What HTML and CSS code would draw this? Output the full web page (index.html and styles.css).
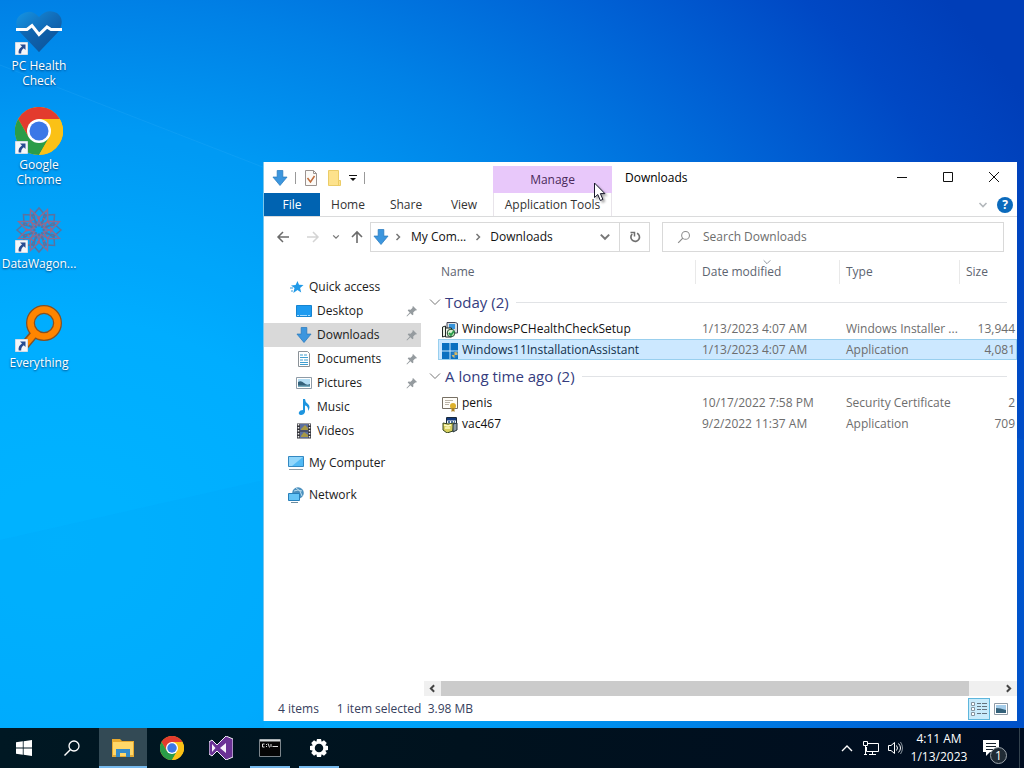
FILE: index.html
```html
<!DOCTYPE html>
<html lang="en">
<head>
<meta charset="utf-8">
<title>Downloads</title>
<link rel="stylesheet" href="styles.css">
</head>
<body>
<svg class="defs" aria-hidden="true">
  <symbol id="download" viewBox="0 0 16 17"><path d="M5 .5h6v7h4.500L8 16.500.5 7.500H5z" fill="#3c96de" stroke="#2879bd" stroke-width=".8"/></symbol>
  <symbol id="chrome" viewBox="0 0 48 48">
    <circle cx="24" cy="24" r="24" fill="#fbc116"/>
    <path d="M3.200 12A24 24 0 0 1 44.800 12H24L13.600 30z" fill="#e33b2e"/>
    <path d="M3.200 12A24 24 0 0 0 24 48L34.400 30 24 35 13.600 30z" fill="#2a9c48"/>
    <path d="M24 48A24 24 0 0 0 44.800 12H24L34.400 30z" fill="#fbc116"/>
    <circle cx="24" cy="24" r="12" fill="#fff"/><circle cx="24" cy="24" r="9.500" fill="#3b78e7"/>
  </symbol>
  <symbol id="shortcut" viewBox="0 0 13 13"><path d="M.5.5h12v12H.5z" fill="#f5f7fa" stroke="#d4dce5"/><path d="M5 2.500h5.500V8L8.800 6.300Q6 8 6.200 11.500H3.700Q2.800 7 7 4.500z" fill="#284c91"/></symbol>
  <symbol id="chevron" viewBox="0 0 10 10"><path d="M1.500 3l3.500 3.500L8.500 3" fill="none" stroke="currentColor" stroke-width="1.600"/></symbol>
  <symbol id="chevron-thin" viewBox="0 0 12 12"><path d="M1 3.500l5 5 5-5" fill="none" stroke="currentColor"/></symbol>
  <symbol id="chevron-right" viewBox="0 0 10 10"><path d="M3.500 2l3 3-3 3" fill="none" stroke="currentColor" stroke-width="1.500"/></symbol>
  <symbol id="pin" viewBox="0 0 12 12"><path d="M7 1l4 4-1 .6-.8-.2-2 2 .2 2.100-1 .8-2-2L1 11.500.5 11l3.200-3.400-2-2 .8-1 2.100.2 2-2-.2-.8z" fill="#959b9f"/></symbol>
  <symbol id="search" viewBox="0 0 18 18"><circle cx="11" cy="7" r="5" fill="none" stroke="currentColor" stroke-width="1.300"/><path d="M7.500 10.500L1.500 16.500" stroke="currentColor" stroke-width="1.500"/></symbol>
  <symbol id="photo" viewBox="0 0 16 12"><path d="M.5.5h15v11H.5z" fill="#fff" stroke="#8f9ba6"/><path d="M2 2h12v8H2z" fill="#b4def5"/><path d="M2 5q3-2 6 1t6 1v3H2z" fill="#34617a"/><path d="M2 8.500h12V10H2z" fill="#77adc0"/></symbol>
</svg>

<div class="screen">
<main class="desktop">
  <svg class="rays" viewBox="0 0 1024 728" preserveAspectRatio="none" aria-hidden="true">
    <path d="M0 65L430 232 1024 440V728H0z" fill="#00a5ff" opacity=".08"/>
    <path d="M0 65L430 232" stroke="#5dc7ff" opacity=".12"/>
    <path d="M0 540L264 480V728H0z" fill="#0090e6" opacity=".08"/>
  </svg>
  <ul class="shortcuts">
    <li><a href="#health">
      <span class="shortcut-art">
        <svg viewBox="0 0 48 48"><defs><linearGradient id="heart" x1="0" y1="0" x2="1" y2="1"><stop offset="0" stop-color="#1595e4"/><stop offset=".5" stop-color="#126cb8"/><stop offset="1" stop-color="#0b4c93"/></linearGradient></defs>
          <path d="M24 44L5 24Q-3 13 6 6.500 16 0 24 9 32 0 42 5 51 12 43 24z" fill="url(#heart)"/>
          <path d="M2 22h11l5-5 8 9 9-8 5 4h7L43 24 24 44 5 24z" fill="#0b559e" opacity=".5"/>
          <path d="M1 21.500h11l5-4 7 9 8-7.500 4 2.500h11" fill="none" stroke="#fff" stroke-width="3"/></svg>
        <svg class="badge"><use href="#shortcut"/></svg>
      </span>PC Health<br>Check</a></li>
    <li><a href="#chrome-app">
      <span class="shortcut-art"><svg><use href="#chrome"/></svg><svg class="badge"><use href="#shortcut"/></svg></span>Google<br>Chrome</a></li>
    <li><a href="#datawagon">
      <span class="shortcut-art">
        <svg viewBox="-24 -24 48 48" fill="none" stroke-width="1.500">
          <g stroke="#5a729f"><path id="petal" d="M0-4L7-14 0-22-7-14z"/><use href="#petal" transform="rotate(45)"/><use href="#petal" transform="rotate(90)"/><use href="#petal" transform="rotate(135)"/><use href="#petal" transform="rotate(180)"/><use href="#petal" transform="rotate(225)"/><use href="#petal" transform="rotate(270)"/><use href="#petal" transform="rotate(315)"/></g>
          <g stroke="#8e6b91" transform="rotate(22.500)"><path id="spike" d="M0-5L5-11 0-22-5-11z"/><use href="#spike" transform="rotate(45)"/><use href="#spike" transform="rotate(90)"/><use href="#spike" transform="rotate(135)"/><use href="#spike" transform="rotate(180)"/><use href="#spike" transform="rotate(225)"/><use href="#spike" transform="rotate(270)"/><use href="#spike" transform="rotate(315)"/></g>
          <circle r="12" stroke="#a9627f" stroke-dasharray="3 3"/>
        </svg>
        <svg class="badge"><use href="#shortcut"/></svg>
      </span>DataWagon...</a></li>
    <li><a href="#everything">
      <span class="shortcut-art">
        <svg viewBox="0 0 48 48" fill="none"><circle cx="29" cy="18" r="13.500" stroke="#865022" stroke-width="9"/><path d="M20 28L9 41" stroke="#865022" stroke-width="9"/><path d="M21 27L10 40" stroke="#ff8500" stroke-width="6"/><circle cx="29" cy="18" r="13.500" stroke="#ff8500" stroke-width="6.500"/></svg>
        <svg class="badge"><use href="#shortcut"/></svg>
      </span>Everything</a></li>
  </ul>

  <section class="window" aria-label="Downloads">
    <header class="ribbon">
      <div class="ribbon-start">
        <div class="quick-bar">
          <svg class="i16"><use href="#download"/></svg>
          <span class="rule"></span>
          <button aria-label="Properties"><svg class="i16" viewBox="0 0 16 16"><path d="M2.500.5h8l3 3v12h-11z" fill="#fcfaf7" stroke="#9a9390"/><path d="M10.500.5v3h3" fill="none" stroke="#9a9390"/><path d="M4.500 8l3 4 4-6" fill="none" stroke="#c06c3c" stroke-width="1.500"/></svg></button>
          <button aria-label="New folder"><svg class="i16" viewBox="0 0 16 16"><path d="M2.500.5h10v10h2v5h-12z" fill="#fde28c" stroke="#ebcc67"/><path d="M12.500 10.500v5" stroke="#edcb62"/></svg></button>
          <button class="customize" aria-label="Customize toolbar"><svg viewBox="0 0 8 8"><path d="M0 1.500h8" stroke="#111"/><path d="M1 4h6L4 7z" fill="#111"/></svg></button>
          <span class="rule"></span>
        </div>
        <nav class="tabs"><button class="file">File</button><button>Home</button><button>Share</button><button>View</button></nav>
      </div>
      <div class="context-tab"><span>Manage</span><button>Application Tools</button></div>
      <div class="ribbon-end">
        <div class="title-row"><h1>Downloads</h1>
          <button aria-label="Minimize"><svg viewBox="0 0 10 10"><path d="M0 5.500h10" stroke="#111"/></svg></button>
          <button aria-label="Maximize"><svg viewBox="0 0 10 10"><path d="M.5.5h9v9h-9z" stroke="#111" fill="none"/></svg></button>
          <button aria-label="Close"><svg viewBox="0 0 10 10"><path d="M0 0l10 10M10 0L0 10" stroke="#111"/></svg></button>
        </div>
        <div class="help-row"><button aria-label="Expand ribbon"><svg class="i10"><use href="#chevron"/></svg></button><button class="help" aria-label="Help">?</button></div>
      </div>
    </header>

    <div class="nav-row">
      <div class="history">
        <button aria-label="Back"><svg viewBox="0 0 14 14"><path d="M13 7H2M7 2L2 7l5 5" fill="none" stroke="#6b6b6b" stroke-width="1.500"/></svg></button>
        <button aria-label="Forward"><svg viewBox="0 0 14 14"><path d="M1 7h11M7 2l5 5-5 5" fill="none" stroke="#d4d4d4" stroke-width="1.500"/></svg></button>
        <button class="recent" aria-label="Recent locations"><svg><use href="#chevron"/></svg></button>
        <button class="up" aria-label="Up"><svg viewBox="0 0 14 14"><path d="M7 13V2M2 7l5-5 5 5" fill="none" stroke="#6b6b6b" stroke-width="1.600"/></svg></button>
      </div>
      <div class="address">
        <svg class="i16"><use href="#download"/></svg>
        <svg class="crumb-arrow"><use href="#chevron-right"/></svg>
        <button>My Com...</button>
        <svg class="crumb-arrow"><use href="#chevron-right"/></svg>
        <button class="current">Downloads</button>
        <button class="drop" aria-label="Previous locations"><svg class="i12"><use href="#chevron"/></svg></button>
        <button class="refresh" aria-label="Refresh"><svg viewBox="0 0 12 12"><path d="M3.200 3A4.300 4.300 0 1 0 8 2.200" fill="none" stroke="#6f6f6f" stroke-width="1.700"/><path d="M1.500 1.500h4v4" fill="none" stroke="#6f6f6f" stroke-width="1.500"/></svg></button>
      </div>
      <label class="search-box"><svg class="i14"><use href="#search"/></svg><input type="search" placeholder="Search Downloads" aria-label="Search Downloads"></label>
    </div>

    <div class="body">
      <nav class="sidebar" aria-label="Folders">
        <a class="root" href="#quick"><svg class="i16" viewBox="0 0 16 16"><path d="M9.500 2l1.500 3.800 4.500.3-3.400 2.800 1.100 4.600-3.700-2.600-4.200 3 1.200-5L3 6.500l4.600-.5z" fill="#219ae8"/><path d="M2 9h3M3 12h2" stroke="#3a9bd9"/></svg>Quick access</a>
        <a href="#desktop"><svg class="i16" viewBox="0 0 16 16"><path d="M.5 2.500h15v11H.5z" fill="#1e9bf0" stroke="#1684d0"/><path d="M1 12.500h14" stroke="#a8dcff" stroke-dasharray="2 1 7 1"/></svg><span>Desktop</span><svg class="pin"><use href="#pin"/></svg></a>
        <a class="active" href="#downloads"><svg class="i16"><use href="#download"/></svg><span>Downloads</span><svg class="pin"><use href="#pin"/></svg></a>
        <a href="#documents"><svg class="i16" viewBox="0 0 16 16"><path d="M2.500.5h9l2 2v13h-11z" fill="#fff" stroke="#8b9298"/><path d="M4 4h3M8 4h3M4 6.500h8M4 9h3M8 9h4M4 11.500h8M4 13.500h8" stroke="#3e9ed0"/></svg><span>Documents</span><svg class="pin"><use href="#pin"/></svg></a>
        <a href="#pictures"><svg class="i16"><use href="#photo"/></svg><span>Pictures</span><svg class="pin"><use href="#pin"/></svg></a>
        <a href="#music"><svg class="i16" viewBox="0 0 16 16"><path d="M7 0h2q0 3 3 5 3 3 0 7 .5-5-3-5.500V13q-1 3-4 3-3-.5-2-3 1-2 4-2z" fill="#1e95df"/></svg><span>Music</span></a>
        <a href="#videos"><svg class="i16" viewBox="0 0 16 16"><path d="M1 .5h14v15H1z" fill="#34353b"/><path d="M4 1h8v6.500H4zM4 8.500h8V15H4z" fill="#5c6f9e"/><path d="M5 6l4-4 3 3v2H5zM5 13l3-4 4 3v2H5z" fill="#a89945"/><path d="M2.500 1v14M13.500 1v14" stroke="#eee" stroke-width="1.500" stroke-dasharray="1.500 1.500"/></svg><span>Videos</span></a>
        <a class="root spaced" href="#computer"><svg class="i16" viewBox="0 0 16 16"><path d="M.5 1.500h15v10H.5z" fill="#51b9f4" stroke="#3488c1"/><path d="M1 2h14L4 11H1z" fill="#91d6fb"/><path d="M1 14.500h14" stroke="#8d9da8"/></svg>My Computer</a>
        <a class="root spaced" href="#network"><svg class="i16" viewBox="0 0 16 16"><circle cx="10" cy="6" r="5.800" fill="#4c90be"/><path d="M8 1q5 2 6 8M6 4q4-2 8 0" stroke="#b9ddef" fill="none"/><path d="M.5 6.500h11v7H.5z" fill="#65c4f6" stroke="#287fb9"/><path d="M3 15.500h7" stroke="#6b8ca0"/></svg>Network</a>
      </nav>

      <div class="listing">
        <div class="list-scroll">
        <table class="files">
          <colgroup><col class="col-name"><col class="col-date"><col class="col-type"><col class="col-size"></colgroup>
          <thead><tr><th scope="col">Name</th><th scope="col">Date modified<svg class="sort"><use href="#chevron-thin"/></svg></th><th scope="col">Type</th><th scope="col">Size</th></tr></thead>
          <tbody>
            <tr class="group"><th colspan="4" scope="rowgroup"><button><svg class="i12"><use href="#chevron-thin"/></svg>Today (2)</button></th></tr>
            <tr><td><svg class="i16" viewBox="0 0 16 16"><path d="M5 .5h8.500l2 1V11H5z" fill="#d8dfe3" stroke="#445"/><path d="M7 2h6v5H7z" fill="#3593db"/><path d="M.5 5l3-1v10l-3 1zM3.500 6h6v9h-6z" fill="#edf3e9" stroke="#202824"/><circle cx="9" cy="11" r="3.800" fill="#d9f4cf" stroke="#244a30"/><path d="M7 11l2 2 3-4" stroke="#2a9c4b" stroke-width="2" fill="none"/></svg>WindowsPCHealthCheckSetup</td><td>1/13/2023 4:07 AM</td><td>Windows Installer ...</td><td>13,944</td></tr>
            <tr class="selected"><td><svg class="i16" viewBox="0 0 16 16"><path d="M0 0h7.500v7.500H0zM8.500 0H16v7.500H8.500zM0 8.500h7.500V16H0zM8.500 8.500H16V16H8.500z" fill="#0b70c0"/><path d="M12.500 8.500q2 1 3.500 1v3q-1 2-3.500 3-2.500-1-3-3v-3q2 0 3-1z" fill="#247dc5"/><path d="M12.500 9v3H9.700q.5 2 2.800 3v-3H15.500v-2.500z" fill="#d9b963"/></svg>Windows11InstallationAssistant</td><td>1/13/2023 4:07 AM</td><td>Application</td><td>4,081</td></tr>
            <tr class="group"><th colspan="4" scope="rowgroup"><button><svg class="i12"><use href="#chevron-thin"/></svg>A long time ago (2)</button></th></tr>
            <tr><td><svg class="i16" viewBox="0 0 16 16"><path d="M.5 1.500h15v11H.5z" fill="#fffdf8" stroke="#777064"/><path d="M3 4.500h8M3 6.500h5M3 8.500h4" stroke="#bcb5a8"/><circle cx="11" cy="10" r="3" fill="#ddb12c"/><path d="M9.500 12v4l1.500-1 1.500 1v-4" fill="#aa8124"/></svg>penis</td><td>10/17/2022 7:58 PM</td><td>Security Certificate</td><td>2</td></tr>
            <tr><td><svg class="i16" viewBox="0 0 16 16"><path d="M4.500.5h10v8h-10z" fill="#f4f7f4" stroke="#17283a"/><path d="M5 1h9v2.500H5z" fill="#12397d"/><path d="M6 5h2M9 5h2M12 5h1" stroke="#1d4d8a" stroke-width="1.500"/><path d="M1 6l5 1 6-1-1 8-6 2-4-3z" fill="#d6cf5e" stroke="#36461f"/><path d="M2 8l4 1 3-1M3 11h5" stroke="#fffbc0" stroke-width="1.500" fill="none"/><path d="M11 7l4-1v7l-4 2z" fill="#8c9ca5" stroke="#253238"/></svg>vac467</td><td>9/2/2022 11:37 AM</td><td>Application</td><td>709</td></tr>
          </tbody>
        </table>
        </div>
        <div class="scrollbar"><button aria-label="Scroll left"><svg viewBox="0 0 10 10"><path d="M6.500 2l-3 3 3 3" stroke="#444" stroke-width="1.800" fill="none"/></svg></button><div class="track"><div class="thumb"></div></div><button aria-label="Scroll right"><svg viewBox="0 0 10 10"><path d="M3.500 2l3 3-3 3" stroke="#444" stroke-width="1.800" fill="none"/></svg></button></div>
      </div>
    </div>

    <footer class="status"><span>4 items</span><span class="picked">1 item selected&nbsp; 3.98 MB</span>
      <div class="views"><button class="on" aria-label="Details view"><svg viewBox="0 0 16 14"><path d="M.5.5h3v3h-3zM.5 5.500h3v3h-3zM.5 10.500h3v3h-3z" fill="#fff" stroke="#8595a0"/><path d="M6 1.500h4M11 1.500h5M6 4.500h4M11 4.500h5M6 7.500h4M11 7.500h5M6 11.500h4M11 11.500h5" stroke="#64727e"/></svg></button><button aria-label="Thumbnail view"><svg class="thumbs" viewBox="0 0 14 12"><path d="M.5.5h13v11H.5z" fill="#fff" stroke="#8f9ba6"/><path d="M2 2h10v8H2z" fill="#a5cdea"/><path d="M2 5q4 0 10 2v3H2z" fill="#34617a"/></svg></button></div>
    </footer>
  </section>
  <svg class="cursor" viewBox="0 0 14 20" aria-hidden="true"><path d="M1.500 1v14.500l3.300-3 2.500 6 2.600-1.100-2.500-5.800h4.500z" fill="#fff" stroke="#17172a"/></svg>
</main>

<footer class="taskbar">
  <div class="launch">
    <button aria-label="Start"><svg class="i16" viewBox="0 0 16 16"><path d="M0 2.200l6.800-.9v6.200H0zM7.600 1.200L16 0v7.500H7.600zM0 8.400h6.800v6.300L0 13.800zM7.600 8.400H16V16l-8.400-1.200z" fill="#fff"/></svg></button>
    <button aria-label="Search"><svg class="i18"><use href="#search"/></svg></button>
  </div>
  <div class="apps">
    <button class="current" aria-label="File Explorer"><svg class="i24" viewBox="0 0 24 24"><path d="M1 3h8l2 2h12v16H1z" fill="#e8a92e"/><path d="M2 6h20v14H2z" fill="#ffd769"/><path d="M5 13h14v8h-4v-4H9v4H5z" fill="#348bca"/><path d="M1 20h4M19 20h4" stroke="#e2aa38" stroke-width="2"/></svg></button>
    <button aria-label="Google Chrome"><svg class="i24"><use href="#chrome"/></svg></button>
    <button aria-label="Visual Studio"><svg class="i24" viewBox="0 0 24 24"><path d="M0 6l3-2 5 5 9-9 7 3v18l-7 3-9-9-5 5-3-2z" fill="#6b3295" stroke="#f3eef8"/><path d="M3 8v8l3.500-4zM11 12l6 5V7z" fill="#f7f2fb"/></svg></button>
    <button class="running" aria-label="Command Prompt"><svg class="i22" viewBox="0 0 22 20"><path d="M.5 1.500h21v17H.5z" fill="#050505" stroke="#7d868c"/><path d="M1 2.500h20" stroke="#d8dcdd" stroke-width="2"/><path d="M5.500 6h-2v3h2M7.500 6v1M7.500 8v1M9 5.500l1.500 4M12 6v3M13.500 8.500H19" stroke="#ddd" fill="none"/></svg></button>
    <button class="running" aria-label="Settings"><svg class="i20" viewBox="-10 -10 20 20"><circle r="5.500" fill="none" stroke="#fff" stroke-width="2.500"/><g fill="#fff"><path id="tooth" d="M-2-9h4l.8 3.500h-5.600z"/><use href="#tooth" transform="rotate(45)"/><use href="#tooth" transform="rotate(90)"/><use href="#tooth" transform="rotate(135)"/><use href="#tooth" transform="rotate(180)"/><use href="#tooth" transform="rotate(225)"/><use href="#tooth" transform="rotate(270)"/><use href="#tooth" transform="rotate(315)"/></g></svg></button>
  </div>
  <div class="tray">
    <button aria-label="Show hidden icons"><svg class="i12" viewBox="0 0 12 12"><path d="M1 9l5-5 5 5" fill="none" stroke="#fff" stroke-width="1.400"/></svg></button>
    <button aria-label="Network"><svg class="i16" viewBox="0 0 16 16"><path d="M5 3.500h10.500v8H3.500V7M9.500 12v3M6 14.500h7M.5 1.500h4v4h-4zM2.500 6v9M1 14.500h3" fill="none" stroke="#fff"/></svg></button>
    <button aria-label="Volume"><svg class="i16" viewBox="0 0 16 16"><path d="M1.500 5.500H4l3.500-3v11L4 10.500H1.500zM9.500 5.500q2 2.500 0 5M11.500 3.500q4 4.500 0 9" fill="none" stroke="#fff"/><path d="M13.500 2q4 6 0 12" fill="none" stroke="#8a959e"/></svg></button>
    <button class="clock">4:11 AM<br>1/13/2023</button>
    <button class="notices" aria-label="1 new notification"><svg class="i18" viewBox="0 0 18 18"><path d="M1 1h16v12H8l-4 4v-4H1z" fill="#fff"/><path d="M4 4.500h10M4 7.500h10M4 10.500h7" stroke="#17232e"/></svg><span class="count">1</span></button>
  </div>
</footer>
</div>
</body>
</html>
```

FILE: styles.css
```css
* { box-sizing: border-box; }
body { margin: 0; font-family: "Open Sans", "Noto Sans", sans-serif; font-size: 12px; line-height: 16px; color: #1b1b1b; }
button { border: 0; padding: 0; background: none; font: inherit; color: inherit; display: flex; align-items: center; justify-content: center; }
a { color: inherit; text-decoration: none; }
svg { display: block; flex: none; }
.defs { position: absolute; width: 0; height: 0; }
.i10 { width: 10px; height: 10px; }
.i12 { width: 12px; height: 12px; }
.i14 { width: 14px; height: 14px; }
.i16 { width: 16px; height: 16px; }
.i18 { width: 18px; height: 18px; }
.i20 { width: 20px; height: 20px; }
.i22 { width: 22px; height: 20px; }
.i24 { width: 24px; height: 24px; }

.screen { min-height: 100vh; display: flex; flex-direction: column; }
.desktop { position: relative; flex: 1; background: radial-gradient(ellipse 108% 125% at 6% 75%, #00b5ff 0%, #00aeff 25%, #009af4 45%, #0081e6 60%, #0062d5 76%, #0048c4 90%, #003eb8 100%); }
.rays { position: absolute; inset: 0; width: 100%; height: 100%; }

.shortcuts { position: relative; width: 78px; margin: 0; padding: 8px 0 0; list-style: none; }
.shortcuts li { height: 99px; }
.shortcuts a { display: block; text-align: center; line-height: 15px; color: #fff; text-shadow: 0 1px 2px #00427c; }
.shortcut-art { position: relative; display: block; width: 48px; height: 48px; margin: 0 auto 2px; }
.shortcut-art svg { width: 48px; height: 48px; }
.shortcut-art .badge { position: absolute; left: 0; bottom: 1px; width: 13px; height: 13px; }

.window { position: absolute; inset: 162px 7px 7px 263px; display: flex; flex-direction: column; background: #fff; border-left: 1px solid #7cc6ea; }
.ribbon { display: flex; border-bottom: 1px solid #dadbdc; }
.ribbon-start { width: 229px; }
.quick-bar { display: flex; align-items: center; gap: 7px; height: 31px; padding-left: 8px; }
.rule { width: 1px; height: 12px; background: #999; }
.quick-bar .customize { width: 8px; }
.customize svg { width: 8px; height: 8px; }
.tabs { display: flex; height: 23px; color: #333; }
.tabs button { width: 56px; }
.tabs button:nth-child(3) { width: 60px; }
.tabs .file { background: #0063b1; color: #fff; }
.context-tab { width: 119px; padding-top: 4px; }
.context-tab span { display: block; height: 27px; line-height: 28px; text-align: center; background: #e8c8fa; color: #4a2a5a; }
.context-tab button { width: 100%; height: 23px; color: #333; border: 1px solid #e8e4ea; border-width: 0 1px; }
.ribbon-end { flex: 1; }
.title-row { display: flex; height: 31px; }
.title-row h1 { flex: 1; margin: 0; padding-left: 13px; font-size: 12px; font-weight: 400; line-height: 31px; color: #000; }
.title-row button { width: 46px; height: 30px; }
.title-row svg { width: 10px; height: 10px; }
.help-row { display: flex; align-items: center; justify-content: flex-end; gap: 9px; height: 23px; padding-right: 4px; color: #b3b8bc; }
.help { width: 16px; height: 16px; border-radius: 50%; background: #0b6abc; color: #fff; font-weight: 700; }

.nav-row { display: flex; align-items: center; height: 41px; padding: 0 13px 2px 0; }
.history { display: flex; align-items: center; width: 106px; padding-left: 12px; color: #777; }
.history button { width: 14px; margin-right: 16px; }
.history svg { width: 14px; height: 14px; }
.history .recent { width: 8px; margin: 0 10px 0 -4px; }
.history .recent svg { width: 8px; height: 8px; }
.history .up { margin-right: 0; }
.address { display: flex; align-items: center; width: 280px; height: 30px; padding-left: 2px; border: 1px solid #d9d9d9; color: #111; }
.crumb-arrow { width: 10px; height: 10px; margin: 0 8px 0 4px; color: #777; }
.address button + .crumb-arrow { margin: 0 7px; }
.address .current { flex: 1; justify-content: flex-start; }
.address .drop { width: 28px; color: #777; }
.address .refresh { width: 30px; height: 28px; border-left: 1px solid #d9d9d9; }
.refresh svg { width: 12px; height: 12px; }
.search-box { display: flex; flex: 1; align-items: center; gap: 12px; height: 30px; margin-left: 12px; padding-left: 14px; border: 1px solid #d9d9d9; color: #8a8a8a; }
.search-box input { flex: 1; min-width: 0; padding: 0; border: 0; outline: 0; background: none; font: inherit; }
.search-box input::placeholder { color: #6d6d6d; opacity: 1; }

.body { display: flex; flex: 1; min-height: 0; }
.sidebar { width: 157px; padding-top: 17px; flex: none; }
.sidebar a { display: flex; align-items: center; gap: 5px; height: 24px; padding: 0 3px 0 32px; }
.sidebar .root { padding-left: 24px; }
.sidebar .spaced { margin-top: 8px; }
.sidebar .active { background: #d9d9d9; }
.sidebar span { flex: 1; }
.pin { width: 12px; height: 12px; }
.listing { flex: 1; min-width: 0; display: flex; flex-direction: column; padding-left: 3px; }
.list-scroll { flex: 1; min-height: 0; overflow: hidden; padding-left: 14px; }
.files { width: 100%; table-layout: fixed; border-collapse: collapse; white-space: nowrap; }
.col-name { width: 257px; }
.col-date { width: 144px; }
.col-type { width: 120px; }
.files th { position: relative; height: 28px; padding: 0 0 0 7px; font-weight: 400; text-align: left; color: #5c6470; }
.files thead th:first-child { padding-left: 3px; }
.files thead th + th { background: linear-gradient(#e9e9e9, #e9e9e9) left center / 1px 24px no-repeat; }
.sort { position: absolute; left: 66px; top: 0; width: 12px; height: 8px; }
.files .group th { height: 32px; padding: 0; }
.group button { width: calc(100% - 1px); margin-left: -9px; gap: 4px; font-size: 15px; line-height: 20px; color: #353c7e; }
.group button::after { content: ""; flex: 1; height: 1px; margin-left: 3px; background: #e1e3e6; }
.group svg { color: #777; }
.files td { height: 21px; padding: 0 0 0 7px; line-height: 19px; color: #6d6d6d; }
.files td:first-child { padding-left: 4px; color: #111; }
.files td:first-child svg { display: inline-block; vertical-align: middle; margin-right: 4px; }
.files td:last-child { padding: 0 2px 0 0; text-align: right; }
.files .selected { background: #cce8ff; box-shadow: inset 0 0 0 1px #99cfee; }
.files .selected td:first-child { color: #12304c; }
.scrollbar { display: flex; height: 15px; margin-bottom: 1px; background: #f0f0f0; }
.scrollbar button { width: 17px; }
.scrollbar svg { width: 11px; height: 11px; }
.track { flex: 1; }
.thumb { width: 94.500%; height: 100%; background: #cbcbcb; }
.status { display: flex; align-items: center; gap: 18px; height: 24px; padding: 0 5px 0 14px; color: #37415e; }
.picked { flex: 1; }
.views { display: flex; }
.views button { width: 22px; height: 22px; }
.views .on { border: 1px solid #5eb6dc; background: #c8ebfb; }
.views svg { width: 16px; height: 14px; }
.views .thumbs { width: 14px; height: 12px; }
.cursor { position: absolute; left: 593px; top: 182px; width: 14px; height: 20px; filter: drop-shadow(2px 2px 1px #0005); }

.taskbar { display: flex; height: 40px; background: linear-gradient(90deg, #001823, #00121e 45%, #000d20); color: #fff; }
.launch { display: flex; width: 99px; }
.launch button { width: 48px; }
.apps { display: flex; flex: 1; gap: 1px; }
.apps button { width: 48px; }
.apps .current { background: #334a55; box-shadow: inset 0 -2px #76b9ed; }
.apps .running { background: linear-gradient(#76b9ed, #76b9ed) center bottom / 40px 2px no-repeat; }
.tray { display: flex; padding-right: 4px; }
.tray button { width: 24px; }
.tray .clock { width: 64px; line-height: 18px; }
.tray .notices { position: relative; width: 49px; border-right: 1px solid #33424e; padding-right: 8px; }
.count { position: absolute; right: 12px; bottom: 4px; width: 17px; height: 17px; border: 1px solid #9ba4ab; border-radius: 50%; background: #202b35; line-height: 15px; }
```
